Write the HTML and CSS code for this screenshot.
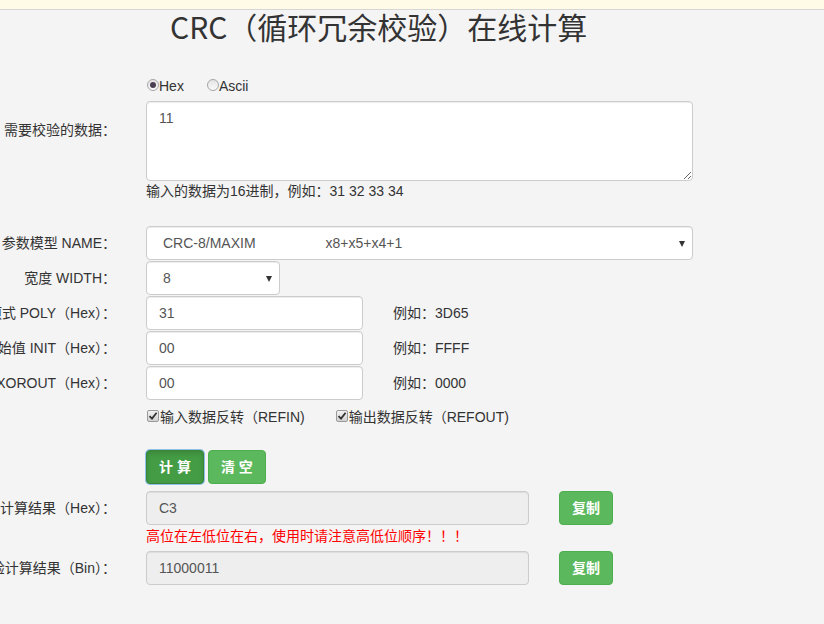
FILE: index.html
```html
<!DOCTYPE html>
<html lang="zh-CN">
<head>
<meta charset="utf-8">
<title>CRC（循环冗余校验）在线计算</title>
<link rel="stylesheet" href="styles.css">
</head>
<body>
<div class="topbar"></div>
<h1 class="title">CRC（循环冗余校验）在线计算</h1>
<form class="form">
  <div class="row row-radio">
    <div class="label"></div>
    <div class="field">
      <label class="radio"><span class="radio-dot checked"></span>Hex</label>
      <label class="radio"><span class="radio-dot"></span>Ascii</label>
    </div>
  </div>

  <div class="row row-data">
    <label class="label label-top">需要校验的数据：</label>
    <div class="field field-col">
      <textarea class="control textarea">11</textarea>
      <p class="help">输入的数据为16进制，例如：31 32 33 34</p>
    </div>
  </div>

  <div class="row row-name">
    <label class="label">参数模型 NAME：</label>
    <div class="field">
      <div class="select-wrap select-name">
        <select class="control select"><option>CRC-8/MAXIM&nbsp;&nbsp;&nbsp;&nbsp;&nbsp;&nbsp;&nbsp;&nbsp;&nbsp;&nbsp;&nbsp;&nbsp;&nbsp;&nbsp;&nbsp;&nbsp;&nbsp;&nbsp;x8+x5+x4+1</option></select>
      </div>
    </div>
  </div>

  <div class="row row-next">
    <label class="label">宽度 WIDTH：</label>
    <div class="field">
      <div class="select-wrap select-width">
        <select class="control select"><option>8</option></select>
      </div>
    </div>
  </div>

  <div class="row row-next">
    <label class="label">多项式 POLY（Hex）：</label>
    <div class="field">
      <input class="control input-param" type="text" value="31">
      <span class="hint">例如：3D65</span>
    </div>
  </div>

  <div class="row row-next">
    <label class="label">初始值 INIT（Hex）：</label>
    <div class="field">
      <input class="control input-param" type="text" value="00">
      <span class="hint">例如：FFFF</span>
    </div>
  </div>

  <div class="row row-next">
    <label class="label">结果异或值 XOROUT（Hex）：</label>
    <div class="field">
      <input class="control input-param" type="text" value="00">
      <span class="hint">例如：0000</span>
    </div>
  </div>

  <div class="row row-check">
    <div class="label"></div>
    <div class="field">
      <label class="check"><span class="check-box"><svg viewBox="0 0 10 10" width="10" height="10"><path d="M1.5 5.2 L4 7.6 L8.6 1.8" fill="none" stroke="#333" stroke-width="1.8"/></svg></span>输入数据反转（REFIN)</label>
      <label class="check"><span class="check-box"><svg viewBox="0 0 10 10" width="10" height="10"><path d="M1.5 5.2 L4 7.6 L8.6 1.8" fill="none" stroke="#333" stroke-width="1.8"/></svg></span>输出数据反转（REFOUT)</label>
    </div>
  </div>

  <div class="row row-btns">
    <div class="label"></div>
    <div class="field buttons">
      <button type="button" class="btn btn-active">计 算</button>
      <button type="button" class="btn">清 空</button>
    </div>
  </div>

  <div class="row row-result">
    <label class="label">校验计算结果（Hex）：</label>
    <div class="field field-col">
      <div class="result-line">
        <input class="control input-result" type="text" value="C3" readonly>
        <button type="button" class="btn">复制</button>
      </div>
      <p class="warn">高位在左低位在右，使用时请注意高低位顺序！！！</p>
    </div>
  </div>

  <div class="row row-bin">
    <label class="label">校验计算结果（Bin）：</label>
    <div class="field">
      <div class="result-line">
        <input class="control input-result" type="text" value="11000011" readonly>
        <button type="button" class="btn">复制</button>
      </div>
    </div>
  </div>
</form>
</body>
</html>
```

FILE: styles.css
```css
html, body {
  margin: 0;
  padding: 0;
}

body {
  background: #f4f4f4;
  font-family: "Liberation Sans", Arial, "Noto Sans CJK SC", sans-serif;
  font-size: 14px;
  line-height: 20px;
  color: #333;
  overflow: hidden;
}

.topbar {
  height: 9px;
  background: #fffbe6;
  border-bottom: 1px solid #d6d6d6;
}

.title {
  margin: 0;
  padding-left: 170px;
  font-family: "Noto Sans CJK SC", sans-serif;
  font-size: 30px;
  font-weight: normal;
  line-height: 33px;
  color: #333;
}

.form {
  margin: 0;
}

.row {
  display: grid;
  grid-template-columns: 116px 1fr;
  column-gap: 30px;
  align-items: center;
}

.row-radio { margin-top: 33px; }
.row-data { margin-top: 5px; align-items: start; }
.row-name { margin-top: 25px; }
.row-next { margin-top: 1px; }
.row-check { margin-top: 7px; }
.row-btns { margin-top: 23px; }
.row-result { margin-top: 7px; align-items: start; }
.row-bin { margin-top: 5px; }

.label {
  display: flex;
  justify-content: flex-end;
  white-space: nowrap;
  color: #333;
}

.row-result .label {
  padding-top: 7px;
}

.label-top {
  padding-top: 19px;
}

.field {
  display: flex;
  align-items: center;
  min-width: 0;
}

.field-col {
  flex-direction: column;
  align-items: flex-start;
}

.control {
  box-sizing: border-box;
  height: 34px;
  padding: 6px 12px;
  font-family: inherit;
  font-size: 14px;
  line-height: 20px;
  color: #555;
  background: #fff;
  border: 1px solid #ccc;
  border-radius: 4px;
  box-shadow: inset 0 1px 1px rgba(0, 0, 0, 0.075);
  outline: none;
  margin: 0;
}

.textarea {
  width: 547px;
  height: 80px;
  padding: 6px 12px;
  resize: vertical;
  display: block;
}

.help {
  margin: 0;
  line-height: 20px;
  color: #333;
}

/* radios */
.radio {
  display: inline-flex;
  align-items: center;
  margin-right: 22px;
  color: #333;
}

.radio-dot {
  box-sizing: border-box;
  width: 12px;
  height: 12px;
  margin-left: 1px;
  margin-top: -2px;
  border-radius: 50%;
  border: 1px solid #a5a5a5;
  background: linear-gradient(#e4e4e4, #fafafa);
  display: inline-flex;
  align-items: center;
  justify-content: center;
}

.radio-dot.checked::before {
  content: "";
  width: 6px;
  height: 6px;
  border-radius: 50%;
  background: #4a3f52;
}

/* selects */
.select-wrap {
  position: relative;
}

.select-name { width: 547px; }
.select-width { width: 134px; }

.select {
  width: 100%;
  -webkit-appearance: none;
  appearance: none;
  padding-left: 16px;
  padding-right: 24px;
}

.select-wrap::after {
  content: "";
  position: absolute;
  right: 8px;
  top: 15px;
  width: 0;
  height: 0;
  border-left: 3px solid transparent;
  border-right: 3px solid transparent;
  border-top: 6px solid #333;
  pointer-events: none;
}

/* params */
.input-param {
  width: 217px;
}

.hint {
  margin-left: 30px;
  color: #333;
}

/* checkboxes */
.check {
  display: inline-flex;
  align-items: center;
  margin-right: 30px;
  color: #333;
}

.check-box {
  box-sizing: border-box;
  width: 12px;
  height: 12px;
  margin-left: 1px;
  margin-right: 1px;
  margin-top: -2px;
  border: 1px solid #9a9a9a;
  border-radius: 2px;
  background: linear-gradient(#f2f2f2, #d2d2d2);
  display: inline-flex;
  align-items: center;
  justify-content: center;
}

.check-box svg {
  display: block;
}

/* buttons */
.buttons {
  gap: 4px;
}

.btn {
  box-sizing: border-box;
  height: 34px;
  padding: 6px 12px;
  font-family: inherit;
  font-size: 14px;
  font-weight: bold;
  line-height: 20px;
  color: #fff;
  background: #5cb85c;
  border: 1px solid #4cae4c;
  border-radius: 4px;
  cursor: pointer;
  margin: 0;
}

.btn-active {
  background: #449d44;
  border-color: #398439;
  box-shadow: inset 0 3px 5px rgba(0, 0, 0, 0.125), 0 0 0 1px #8fc1ea;
}

/* results */
.result-line {
  display: flex;
  align-items: center;
  gap: 30px;
}

.input-result {
  width: 383px;
  background: #eee;
}

.warn {
  margin: 1px 0 0;
  line-height: 20px;
  color: #ff0000;
}
```
